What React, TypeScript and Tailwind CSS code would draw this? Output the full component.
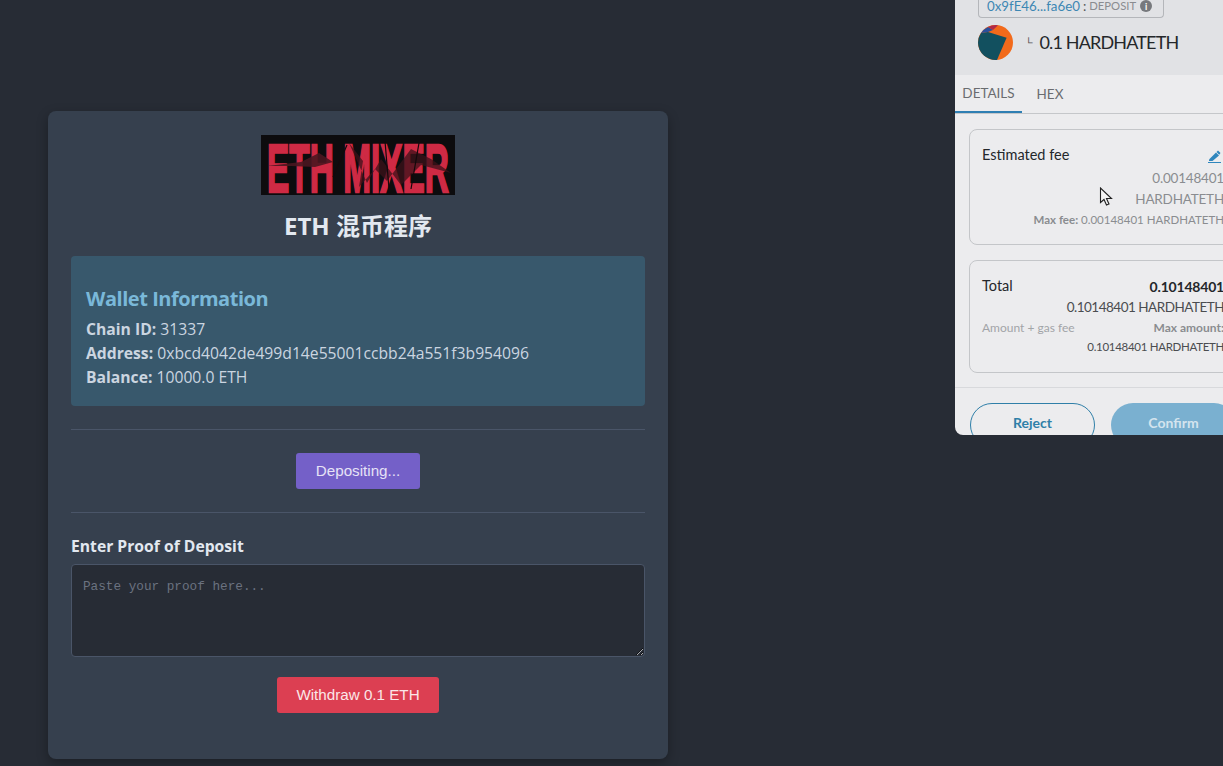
const uiFont = "font-['Open_Sans','Noto_Sans_CJK_SC',sans-serif]";
const mmFont = "font-['Lato',sans-serif]";

const Logo = () => (
  <svg width="194" height="60" viewBox="0 0 194 60" className="block">
    <rect width="194" height="60" fill="#0d0c0e" />
    <text
      transform="translate(6 56.5) scale(1 2.37)"
      textLength="182"
      lengthAdjust="spacingAndGlyphs"
      fontFamily="'Liberation Sans', sans-serif"
      fontWeight="700"
      fontSize="29"
      stroke="#cf2a44"
      strokeWidth="1"
      fill="#cf2a44"
    >
      ETH MIXER
    </text>
    <path d="M6 31 L40 27 L58 18 L72 27 L54 32 L30 31 Z" fill="#4a1620" opacity="0.9" />
    <path d="M88 8 L102 26 L98 52 L114 34 L126 46 L150 14 L170 24 L190 38 L160 30 L140 50 L120 24 L106 48 Z" fill="#3c1119" opacity="0.75" />
    <path d="M72 42 L86 10 M124 6 L128 54 M158 8 L150 54" stroke="#12090b" strokeWidth="1.2" />
  </svg>
);

const MetaMaskPopup = () => (
  <div className={`absolute left-[955px] top-0 h-[435px] w-[296px] overflow-hidden rounded-bl-lg bg-[#ececee] ${mmFont}`}>
    <div className="h-[75px] bg-[#e1e2e5] pl-[23px]">
      <div className="flex h-[18px] w-[186px] items-start gap-[3px] rounded-b border border-t-0 border-[#b4b6ba] pl-2 text-[13.3px] leading-[12px]">
        <span className="text-[#3d87b3]">0x9fE46...fa6e0</span>
        <span className="text-[#555]">:</span>
        <span className="text-[11.3px] text-[#8a8c90]">DEPOSIT</span>
        <span className="ml-[1px] flex h-3 w-3 items-center justify-center rounded-full bg-[#77797d] text-[9px] font-bold leading-none text-white">i</span>
      </div>
      <div className="mt-[7px] flex items-center">
        <svg width="35" height="35" viewBox="0 0 35 35">
          <circle cx="17.5" cy="17.5" r="17.5" fill="#f26a1b" />
          <path d="M0 17.5 A17.5 17.5 0 0 1 3 8 L10 7 L28.6 12.8 L19 34.9 A17.5 17.5 0 0 1 0 17.5Z" fill="#12505f" />
          <path d="M3 8 A17.5 17.5 0 0 1 10 2 L15 5 L10 7Z" fill="#2a4f9c" />
          <path d="M10 2 A17.5 17.5 0 0 1 20 0.2 L15 5Z" fill="#b02a4a" />
        </svg>
        <span className="ml-3 text-[10px] font-bold text-[#555]">└</span>
        <span className="ml-[7px] -translate-y-px text-lg tracking-[-0.85px] text-[#24272a]">0.1 HARDHATETH</span>
      </div>
    </div>
    <div className="flex h-[39px] border-b border-[#c5c7ca] text-[13.5px] text-[#6a6c70]">
      <div className="flex w-[67px] items-center justify-center border-b-2 border-[#2f7fb3]">DETAILS</div>
      <div className="ml-[2px] flex w-[52px] items-center justify-center">HEX</div>
    </div>
    <div className="px-[14px] pt-[15px]">
      <div className="h-[116px] rounded-lg border border-[#c4c6c9] px-3 pt-[15px]">
        <div className="flex justify-between pr-[3px] text-[14.5px] leading-[20px] text-[#24272a]">
          <span>Estimated fee</span>
          <svg width="13" height="13" viewBox="0 0 13 13" className="mt-[5px]">
            <path d="M1 9.5 L8 2.5 L11 5.5 L4.5 11 H1Z" fill="#2f86bd" />
            <path d="M8.5 2 L10 0.5 L12.5 3 L11.2 4.8Z" fill="#2f86bd" />
            <rect x="0" y="12" width="13" height="1" fill="#2f86bd" />
          </svg>
        </div>
        <div className="mt-[3px] text-right text-[13.5px] leading-[21px] tracking-[-0.2px] text-[#8a8c90]">
          <div>0.00148401</div>
          <div>HARDHATETH</div>
        </div>
        <div className="mt-[1px] text-right text-[11.5px] text-[#8a8c90]">
          <b className="font-bold">Max fee:</b> 0.00148401 HARDHATETH
        </div>
      </div>
      <div className="mt-[15px] h-[113px] rounded-lg border border-[#c4c6c9] px-3 pt-[15px]">
        <div className="flex justify-between text-[14.5px] leading-[20px] text-[#24272a]">
          <span>Total</span>
          <b className="mt-px text-sm font-bold tracking-[-0.2px]">0.10148401</b>
        </div>
        <div className="text-right text-[13.5px] leading-[21px] tracking-[-0.5px] text-[#4b4d50]">0.10148401 HARDHATETH</div>
        <div className="-mt-px flex justify-between text-xs leading-[21px] text-[#a2a4a8]">
          <span>Amount + gas fee</span>
          <b className="font-bold text-[#8a8c90]">Max amount:</b>
        </div>
        <div className="text-right text-[11.5px] leading-[18px] tracking-[-0.3px] text-[#4b4d50]">0.10148401 HARDHATETH</div>
      </div>
    </div>
    <div className="mt-[14px] flex gap-4 border-t border-[#d8d9dc] px-[15px] pt-[15px]">
      <div className="flex h-[44px] w-[125px] shrink-0 items-center justify-center rounded-full border border-[#2f7fa8] pb-1 text-sm font-bold text-[#2f7fa8]">Reject</div>
      <div className="flex h-[44px] w-[125px] shrink-0 items-center justify-center rounded-full bg-[#7ab0d0] pb-1 text-sm font-bold text-[#d4e4ee]">Confirm</div>
    </div>
  </div>
);

const App = () => {
  return (
    <div className={`relative h-[766px] overflow-hidden bg-[#272c35] pl-12 pt-[111px] ${uiFont}`}>
      <div className="h-[648px] w-[620px] rounded-lg bg-[#36404e] px-[23px] pt-6 shadow-[0_4px_12px_rgba(0,0,0,0.3)]">
        <div className="flex justify-center">
          <Logo />
        </div>
        <h1 className="mt-[15px] text-center text-2xl font-bold leading-8 text-[#e2e8f0]">ETH 混币程序</h1>
        <div className="mt-[14px] h-[150px] rounded bg-[#38586c] px-[15px] pt-[27px] text-[15.7px] leading-6 text-[#cbd5e0]">
          <h2 className="mb-[2px] text-xl font-bold leading-[32px] tracking-[-0.45px] text-[#7ab8d9]">Wallet Information</h2>
          <p><b className="font-bold">Chain ID:</b> 31337</p>
          <p><b className="font-bold">Address:</b> 0xbcd4042de499d14e55001ccbb24a551f3b954096</p>
          <p><b className="font-bold">Balance:</b> 10000.0 ETH</p>
        </div>
        <hr className="mt-[23px] border-[#4a5568]" />
        <div className="mt-[23px] flex justify-center">
          <button className="h-9 w-[124px] rounded-[3px] bg-[#7460c8] font-['Liberation_Sans',sans-serif] text-[15.2px] text-[#e6e2f6]">Depositing...</button>
        </div>
        <hr className="mt-[23px] border-[#4a5568]" />
        <label className="mt-[21px] block text-[15.7px] font-bold leading-6 text-[#e2e8f0]">Enter Proof of Deposit</label>
        <textarea
          className="mt-[6px] block h-[93px] w-full rounded border border-[#4a5568] bg-[#272c35] px-[11px] py-3 font-['Liberation_Mono',monospace] text-[12.7px] leading-[20px] placeholder:text-[#6b7280]"
          placeholder="Paste your proof here..."
        />
        <div className="mt-5 flex justify-center">
          <button className="h-9 w-[162px] rounded-[3px] bg-[#dc3f52] font-['Liberation_Sans',sans-serif] text-[15.2px] text-[#fbe6e8]">Withdraw 0.1 ETH</button>
        </div>
      </div>
      <MetaMaskPopup />
      <svg width="16" height="20" viewBox="0 0 16 20" className="absolute left-[1099px] top-[187px]">
        <path d="M1.5 1 V15.5 L5 12.5 L7.5 18 L10 17 L7.5 11.5 H12.5 Z" fill="#f4f4f4" stroke="#222" strokeWidth="1.1" />
      </svg>
    </div>
  );
};

export default App;
